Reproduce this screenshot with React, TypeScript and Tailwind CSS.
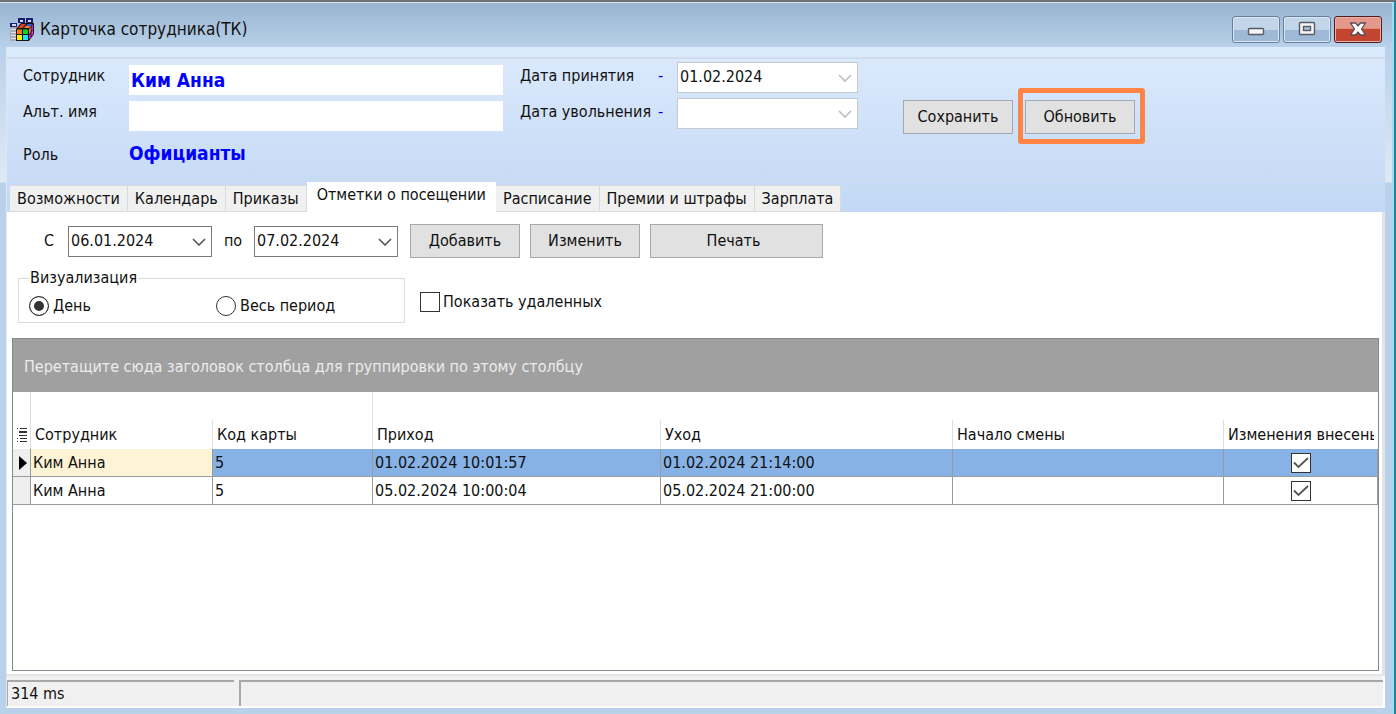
import { useState } from 'react';
import type { ReactNode } from 'react';

interface Visit {
  name: string;
  card: string;
  arrival: string;
  leave: string;
  shift: string;
  changed: boolean;
}

const visits: Visit[] = [
  { name: 'Ким Анна', card: '5', arrival: '01.02.2024 10:01:57', leave: '01.02.2024 21:14:00', shift: '', changed: true },
  { name: 'Ким Анна', card: '5', arrival: '05.02.2024 10:00:04', leave: '05.02.2024 21:00:00', shift: '', changed: true },
];

const tabs = ['Возможности', 'Календарь', 'Приказы', 'Отметки о посещении', 'Расписание', 'Премии и штрафы', 'Зарплата'];

const columns = ['Сотрудник', 'Код карты', 'Приход', 'Уход', 'Начало смены', 'Изменения внесены'];

function AppIcon() {
  return (
    <svg width="24" height="24" viewBox="0 0 24 24" shapeRendering="crispEdges" aria-hidden="true">
      <path d="M0 6h7v18H0z" fill="#a9adb6" />
      <path d="M8 1h7v5H8zM16 1h7v5h-7zM0 6h7v4H0z" fill="#1c1c74" />
      <path d="M10 3h3v2h-3zM18 3h3v2h-3zM2 7h4v2H2z" fill="#d8dce8" />
      <path d="M1 12h5v1H1zM1 15h5v1H1zM1 18h5v1H1zM1 21h5v1H1z" fill="#dfe3e8" />
      <g shapeRendering="auto">
        <path d="M6 12l5-6h13v11l-5 7H6z" fill="#1a1410" />
        <path d="M8 11l3.500-4h4.500l-3.500 4z" fill="#e0401c" />
        <path d="M14 11l3.500-4h5l-3.500 4z" fill="#3558d8" />
        <path d="M14 11l1.700-2h5l-1.700 2z" fill="#f58220" />
        <path d="M7 12.500h5v4.500H7z" fill="#ff7a1a" />
        <path d="M13 12.500h5v4.500h-5z" fill="#12d21c" />
        <path d="M7 18h5v5H7z" fill="#fff200" />
        <path d="M13 18h5v5h-5z" fill="#19e6f0" />
        <path d="M19 12.300l1.700-2.300v5L19 17.300z" fill="#f58220" />
        <path d="M21.500 9.300l1.500-2v5l-1.500 2z" fill="#b030d0" />
        <path d="M19 18.300l1.700-2.300v4.500L19 22.500z" fill="#d01cd8" />
        <path d="M21.500 15l1.500-2v4l-1.500 2z" fill="#ff30ff" />
      </g>
    </svg>
  );
}

function Button({ children, className }: { children: ReactNode; className: string }) {
  return (
    <button type="button" className={`h-[34px] border border-[#a4a9ad] bg-[#e1e1e1] text-center ${className}`}>
      {children}
    </button>
  );
}

function DateBox({ id, value, muted, className }: { id: string; value: string; muted?: boolean; className: string }) {
  return (
    <div className={`relative h-[31px] ${className}`}>
      <select
        id={id}
        defaultValue={value}
        className={`size-full appearance-none bg-white px-[2px] ${muted ? 'border border-[#c3c9cf] pb-[2px]' : 'border border-[#7a7a7a]'}`}
      >
        <option>{value}</option>
      </select>
      <svg
        className={`pointer-events-none absolute right-[6px] top-[12px] ${muted ? 'text-[#bdbdbd]' : 'text-[#555]'}`}
        width="14"
        height="8"
        viewBox="0 0 14 8"
        fill="none"
        stroke="currentColor"
        strokeWidth="1.600"
        aria-hidden="true"
      >
        <path d="M1 1l6 6 6-6" />
      </svg>
    </div>
  );
}

function TitleBar() {
  const glass =
    'flex h-[27px] w-12 items-center justify-center rounded-[3px] border border-[#667f9c] bg-linear-to-b from-[#c3d5e8] from-50% to-[#9db9d6] to-50% shadow-[inset_0_0_0_1px_#d9e6f3]';
  return (
    <header className="flex h-11 items-center gap-[6px] pt-2 pr-[10px] pl-[10px]">
      <AppIcon />
      <h1 className="flex-1 text-[17px]">Карточка сотрудника(ТК)</h1>
      <div className="flex gap-[3px]">
        <button type="button" aria-label="Свернуть" className={glass}>
          <svg width="18" height="16" viewBox="0 0 18 16" aria-hidden="true">
            <rect x="1.500" y="7.500" width="15" height="6" rx="1" fill="#f4f4f6" stroke="#555a66" strokeWidth="1.400" />
          </svg>
        </button>
        <button type="button" aria-label="Развернуть" className={glass}>
          <svg width="18" height="16" viewBox="0 0 18 16" aria-hidden="true">
            <rect x="1.500" y="1.500" width="15" height="12" rx="1" fill="#f4f4f6" stroke="#555a66" strokeWidth="1.400" />
            <rect x="5.500" y="5.500" width="7" height="4" fill="#a9c0da" stroke="#555a66" strokeWidth="1.400" />
          </svg>
        </button>
        <button
          type="button"
          aria-label="Закрыть"
          className="flex h-[27px] w-12 items-center justify-center rounded-[3px] border border-[#4f1c22] bg-linear-to-b from-[#e3988b] from-45% to-[#c4452f] to-50% shadow-[inset_0_0_0_1px_#eab0a5]"
        >
          <svg width="18" height="14" viewBox="0 0 18 14" aria-hidden="true">
            <path
              d="M1.500 1h5L9 3.800 11.500 1h5L12.500 7l4 6h-5L9 10.200 6.500 13h-5l4-6z"
              fill="#fff"
              stroke="#5c4a55"
              strokeWidth="1.300"
              strokeLinejoin="round"
            />
          </svg>
        </button>
      </div>
    </header>
  );
}

function EmployeeForm() {
  return (
    <section className="mt-[10px] flex h-[123px] items-start border-t-2 border-b border-t-[#d0dcec] border-b-[#d0dae8] pl-4">
      <div className="flex flex-col">
        <div className="flex h-9 pt-[6px]">
          <label htmlFor="employee" className="w-[106px] pt-px">Сотрудник</label>
          <input
            id="employee"
            readOnly
            defaultValue="Ким Анна"
            className="h-[30px] w-[374px] bg-white px-[2px] text-[19px] font-bold text-[#0000ff]"
          />
        </div>
        <div className="flex h-9 pt-[6px]">
          <label htmlFor="alias" className="w-[106px] pt-px">Альт. имя</label>
          <input id="alias" className="h-[30px] w-[374px] bg-white px-[2px] text-[19px] font-bold" />
        </div>
        <div className="flex items-baseline pt-3">
          <span className="w-[106px]">Роль</span>
          <span className="text-[19px] font-bold text-[#0000ff]">Официанты</span>
        </div>
      </div>

      <div className="ml-[17px] mt-[3px] flex flex-col gap-[5px]">
        <div className="flex">
          <label htmlFor="hired" className="w-[138px] pt-1">Дата принятия</label>
          <span className="w-[19px] pt-1 text-[#0000ff]">-</span>
          <DateBox id="hired" value="01.02.2024" muted className="w-[181px]" />
        </div>
        <div className="flex">
          <label htmlFor="fired" className="w-[138px] pt-1 whitespace-nowrap">Дата увольнения</label>
          <span className="w-[19px] pt-1 text-[#0000ff]">-</span>
          <DateBox id="fired" value="" muted className="w-[181px]" />
        </div>
      </div>

      <div className="ml-[45px] mt-[41px] flex gap-3">
        <Button className="w-[110px]">Сохранить</Button>
        <div className="relative">
          <Button className="w-[110px]">Обновить</Button>
          <div className="pointer-events-none absolute -top-3 -right-[10px] -bottom-[10px] -left-[7px] rounded-[3px] border-[5px] border-[#ff8445]" />
        </div>
      </div>
    </section>
  );
}

function Check({ checked, label }: { checked?: boolean; label?: string }) {
  return (
    <span className="relative inline-flex size-5">
      <input
        type="checkbox"
        aria-label={label}
        defaultChecked={checked}
        className="peer size-5 appearance-none border border-[#333] bg-white"
      />
      <svg
        className="pointer-events-none absolute inset-0 hidden peer-checked:block"
        viewBox="0 0 20 20"
        fill="none"
        stroke="#555"
        strokeWidth="1.800"
        aria-hidden="true"
      >
        <path d="M3 9.500l4.500 4.500L17 5" />
      </svg>
    </span>
  );
}

function Radio({ value, checked, children }: { value: string; checked?: boolean; children: ReactNode }) {
  return (
    <label className="flex w-[187px] items-center gap-1">
      <input
        type="radio"
        name="view"
        value={value}
        defaultChecked={checked}
        className="size-5 appearance-none rounded-full border border-[#333] bg-white checked:bg-[#333] checked:shadow-[inset_0_0_0_4px_#fff]"
      />
      {children}
    </label>
  );
}

function VisitsGrid() {
  return (
    <div className="flex flex-1 flex-col border border-[#858a94] bg-white">
      <p className="h-[53px] bg-[#a0a0a0] pl-[11px] pt-[18px] text-[#ececec]">
        Перетащите сюда заголовок столбца для группировки по этому столбцу
      </p>
      <table className="w-full table-fixed border-separate border-spacing-0 text-left">
        <colgroup>
          <col className="w-[18px]" />
          <col className="w-[182px]" />
          <col className="w-[160px]" />
          <col className="w-[288px]" />
          <col className="w-[292px]" />
          <col />
          <col className="w-[154px]" />
        </colgroup>
        <thead>
          <tr className="h-7">
            <td className="border-r border-[#dedede]" />
            <td colSpan={2} className="border-r border-[#dedede]" />
            <td colSpan={4} />
          </tr>
          <tr className="h-[29px]">
            <th className="border-r border-[#dedede] pl-1">
              <svg width="10" height="16" viewBox="0 0 10 16" shapeRendering="crispEdges" aria-hidden="true">
                <path d="M0 1h1v1H0zM3 1h7v1H3zM2 4h8v2H2zM2 8h8v1H2zM0 11h1v1H0zM3 11h7v1H3zM0 14h1v1H0zM3 14h7v1H3z" fill="#333" />
              </svg>
            </th>
            {columns.map(column => (
              <th key={column} className="border-r border-[#dedede] px-1 font-normal whitespace-nowrap last:border-r-0">
                <div className="overflow-hidden">{column}</div>
              </th>
            ))}
          </tr>
        </thead>
        <tbody>
          {visits.map((v, i) => {
            const cell = 'border-r border-b border-[#9b9b9b] px-[2px] whitespace-nowrap';
            return (
              <tr key={i} className={i === 0 ? 'h-7 bg-[#86b2e6]' : 'h-7'}>
                <td className="border-r border-b border-[#9b9b9b] bg-[#efefef] pl-[6px]">
                  {i === 0 && (
                    <svg width="8" height="14" viewBox="0 0 8 14" aria-hidden="true">
                      <path d="M0 0l8 7-8 7z" fill="#000" />
                    </svg>
                  )}
                </td>
                <td className={i === 0 ? `${cell} bg-[#fff3d6]` : cell}>{v.name}</td>
                <td className={cell}>{v.card}</td>
                <td className={cell}>{v.arrival}</td>
                <td className={cell}>{v.leave}</td>
                <td className={cell}>{v.shift}</td>
                <td className="border-r border-b border-[#9b9b9b]">
                  <div className="flex justify-center">
                    <Check checked={v.changed} label="Изменения внесены" />
                  </div>
                </td>
              </tr>
            );
          })}
        </tbody>
      </table>
    </div>
  );
}

export default function App() {
  const [active, setActive] = useState(3);

  return (
    <div className="flex min-h-screen flex-col border-t-2 border-r-2 border-t-[#6f7274] border-r-[#168a9c] bg-[#b9d1ea] font-['DejaVu_Sans_Condensed','DejaVu_Sans',sans-serif] text-[16px] leading-[20px] text-[#111]">
      <div className="flex flex-1 flex-col border-t border-r-2 border-t-[#d5e2ee] border-r-[#a4dcec] bg-[linear-gradient(#98b4d0,#b9d1ea_44px,#dfe9f5_179px,#b9d1ea_180px)]">
        <TitleBar />
        <div className="mr-[7px] mb-[6px] ml-[6px] flex flex-1 flex-col border-l border-[#dfe7ef] bg-linear-to-b from-[#dceafd] to-[#c2d8f4] to-[165px]">
          <EmployeeForm />

          <div className="flex items-end pl-[3px] pt-[2px]" role="tablist">
            {tabs.map((tab, i) => (
              <button
                key={tab}
                type="button"
                role="tab"
                aria-selected={i === active}
                onClick={() => setActive(i)}
                className={
                  i === active
                    ? 'h-[30px] bg-white px-[10px] pb-1 whitespace-nowrap'
                    : 'h-[27px] border border-l-0 border-[#dadada] bg-[#f0f0f0] px-[7px] whitespace-nowrap'
                }
              >
                {tab}
              </button>
            ))}
          </div>

          <main className="flex flex-1 flex-col border-r-[3px] border-b-2 border-[#e4e4e4] bg-white pt-3 pr-[3px] pb-[3px] pl-[5px]">
            <div className="flex items-center pl-8">
              <label htmlFor="from" className="w-6">С</label>
              <DateBox id="from" value="06.01.2024" className="w-[144px]" />
              <label htmlFor="to" className="w-[42px] text-center">по</label>
              <DateBox id="to" value="07.02.2024" className="w-[144px]" />
              <div className="ml-3 flex gap-[10px]">
                <Button className="w-[110px]">Добавить</Button>
                <Button className="w-[110px]">Изменить</Button>
                <Button className="w-[173px] pr-[6px]">Печать</Button>
              </div>
            </div>

            <div className="mt-[10px] flex items-start">
              <fieldset className="ml-[6px] h-[55px] w-[387px] border border-[#dcdcdc] pl-[10px]">
                <legend className="px-px">Визуализация</legend>
                <div className="flex pt-2">
                  <Radio value="day" checked>День</Radio>
                  <Radio value="period">Весь период</Radio>
                </div>
              </fieldset>
              <label className="mt-6 ml-[15px] flex items-center gap-[3px]">
                <Check />
                Показать удаленных
              </label>
            </div>

            <div className="mt-[15px] flex flex-1 flex-col">
              <VisitsGrid />
            </div>
          </main>

          <footer className="flex gap-[5px] border-r-2 border-b-2 border-white bg-[#f0f0f0] pt-1">
            <div className="h-[26px] w-[227px] border-t-2 border-l border-[#a8a8a8] pl-[3px] pt-[2px]">314 ms</div>
            <div className="h-[26px] flex-1 border-t-2 border-l-2 border-[#a8a8a8]" />
          </footer>
        </div>
      </div>
    </div>
  );
}
